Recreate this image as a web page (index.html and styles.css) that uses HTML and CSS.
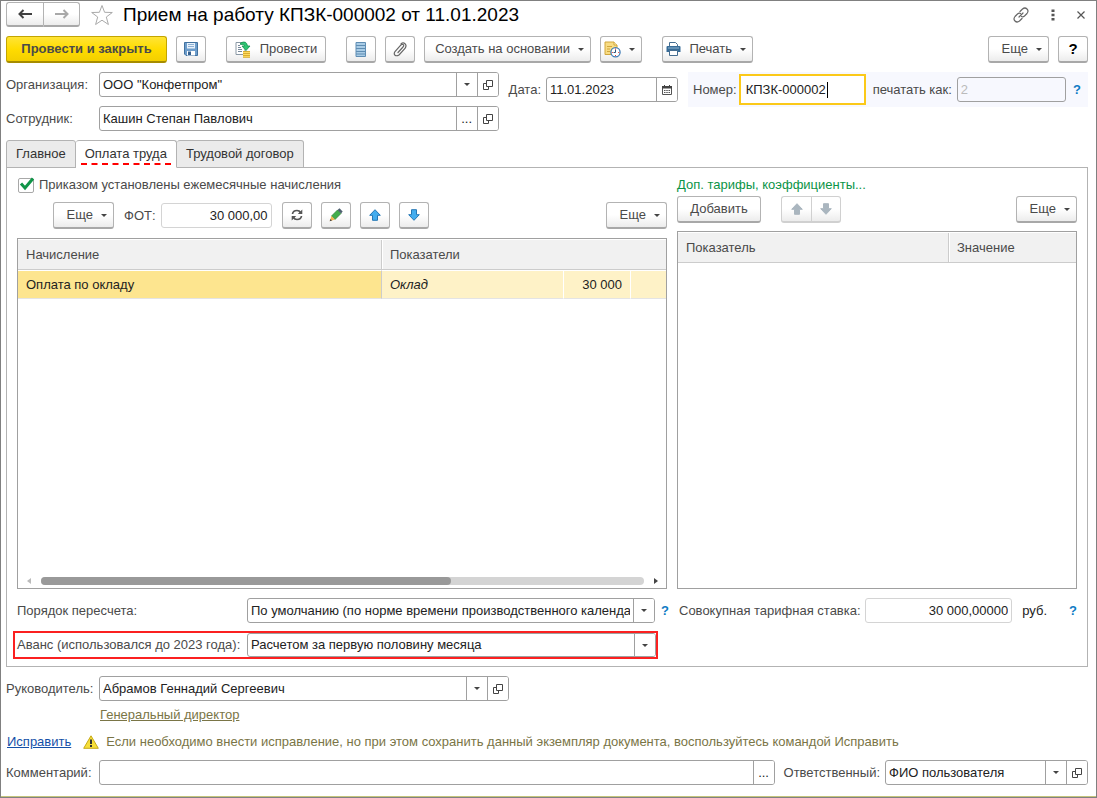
FILE: index.html
```html
<!DOCTYPE html>
<html lang="ru">
<head>
<meta charset="utf-8">
<title>Прием на работу</title>
<link rel="stylesheet" href="styles.css">
</head>
<body>
<svg class="sprite" aria-hidden="true">
  <symbol id="i-open" viewBox="0 0 10 10"><path d="M3.500 .5h6v6h-6zM3.500 3.500h-3v6h5v-3" fill="none" stroke="#444"/></symbol>
  <symbol id="i-up" viewBox="0 0 12 12"><path d="M6 .7 11.300 6.300H8.500v5h-5v-5H.7z" stroke-linejoin="round"/></symbol>
  <symbol id="i-down" viewBox="0 0 12 12"><path d="M6 11.300 .7 5.700h2.800v-5h5v5h2.800z" stroke-linejoin="round"/></symbol>
</svg>
<main class="window">
  <header class="titlebar">
    <div class="pair nav">
      <button class="btn" aria-label="Назад"><svg width="15" height="10" viewBox="0 0 15 10"><path d="M2 5h12" stroke="#404040" stroke-width="2"/><path d="M5.500 1 1.500 5l4 4" fill="none" stroke="#404040" stroke-width="2"/></svg></button>
      <button class="btn" aria-label="Вперед"><svg width="15" height="10" viewBox="0 0 15 10"><path d="M1 5h12" stroke="#a8a8a8" stroke-width="2"/><path d="M9.500 1l4 4-4 4" fill="none" stroke="#a8a8a8" stroke-width="2"/></svg></button>
    </div>
    <button class="plain star" aria-label="В избранное"><svg width="24" height="22" viewBox="0 0 24 22"><path d="M12 1.500 14.600 8.300 22.300 8.500 16.300 13 18.400 20.500 12 16.200 5.600 20.500 7.700 13 1.700 8.500 9.400 8.300z" fill="#fff" stroke="#aaa"/></svg></button>
    <h1>Прием на работу КПЗК-000002 от 11.01.2023</h1>
    <div class="controls">
      <button class="plain" aria-label="Ссылка"><svg width="16" height="16" viewBox="0 0 16 16"><g fill="none" stroke="#666" stroke-width="1.200" stroke-linecap="round"><path d="M7 4.500 9.500 2Q12 0 14 2t0 4.500L11.500 9Q10 10.300 8.500 9.500M9 11.500 6.500 14Q4 16 2 14T2 9.500L4.500 7Q6 5.700 7.500 6.500"/><path d="M6 10l4-4"/></g></svg></button>
      <button class="plain" aria-label="Меню"><svg width="4" height="12" viewBox="0 0 4 12"><path d="M.5 .5h3v2.500h-3zM.5 4.700h3v2.500h-3zM.5 9h3v2.500h-3z" fill="#555"/></svg></button>
      <button class="plain" aria-label="Закрыть"><svg width="8" height="8" viewBox="0 0 8 8"><path d="M.5 .5l7 7M7.500 .5l-7 7" stroke="#555" stroke-width="1.200"/></svg></button>
    </div>
  </header>

  <div class="toolbar">
    <button class="btn primary">Провести и закрыть</button>
    <button class="btn icon" aria-label="Записать"><svg width="14" height="14" viewBox="0 0 14 14"><path d="M.5 .5h13v13H2L.5 12z" fill="#6d9dcb" stroke="#41719f"/><path d="M3 1h8v5.500H3z" fill="#e8f1fa"/><path d="M4 2.500h6M4 4.500h6" stroke="#8cb0d4"/><path d="M3 9h8v4.500H3z" fill="#fff"/><path d="M4 9.500h3V13H4z" fill="#35608f"/></svg></button>
    <button class="btn post"><svg width="16" height="17" viewBox="0 0 16 17"><path d="M1 1.500h9v12H1z" fill="#fff" stroke="#8a98a5"/><path d="M3 4.500h2M3 6.500h3M3 8.500h4M3 10.500h4" stroke="#789"/><path d="M5.500 2q6-3 7 3h2.500l-4 4.500-4-4.500h2.500Q9.500 2.500 5.500 3.500z" fill="#2cc572" stroke="#15904c" stroke-width=".8"/><path d="M8 10.500h7V16H8z" fill="#ffdc62"/><path d="M8 10.500h7M8 12.500h7M8 14.500h7M8 16.300h7" stroke="#d9ad30"/></svg>Провести</button>
    <button class="btn icon" aria-label="Движения"><svg width="12" height="15" viewBox="0 0 12 15"><path d="M1 .5h9.500v14H1z" fill="#a9cce6" stroke="#5f8db3"/><path d="M1 3.500h9.500M1 6.500h9.500M1 9.500h9.500M1 12h9.500" stroke="#5f8db3"/></svg></button>
    <button class="btn icon" aria-label="Файлы"><svg width="14" height="15" viewBox="0 0 14 15"><path d="M5 10.500 10 5q1.500-2 0-2.500T7.500 3.500L2 9.500Q.5 12 2 13.200t4-.2L12 6.500Q14 3.500 12 1.700T8 2" fill="none" stroke="#666" stroke-width="1.200" stroke-linecap="round"/></svg></button>
    <button class="btn menu wide">Создать на основании</button>
    <button class="btn menu later" aria-label="Отложить"><svg width="17" height="17" viewBox="0 0 17 17"><path d="M1 1h9l3 3v9.500H1z" fill="#f8dc83" stroke="#d0a63c"/><path d="M10 1v3h3" fill="#fff3c4" stroke="#d0a63c"/><path d="M3 5.500h5M3 8h3M3 10.500h3" stroke="#d0a63c"/><circle cx="11.500" cy="11.300" r="4.600" fill="#fff" stroke="#3e7cb6" stroke-width="1.300"/><path d="M11.500 8.500v3H9.500" stroke="#28527d" fill="none"/><path d="M11.500 7.500v1M11.500 14v1M7.800 11.500h1M14.200 11.500h1" stroke="#e23b2e"/></svg></button>
    <button class="btn menu print"><svg width="15" height="14" viewBox="0 0 15 14"><path d="M3.500 4V.5h6l2 2V4" fill="#fff" stroke="#456d90"/><path d="M1.500 4h12q1 0 1 1v5H.5V5q0-1 1-1z" fill="#386c97"/><path d="M2 6h11" stroke="#8fb5d2"/><path d="M3.500 8.500h8v5h-8z" fill="#fff" stroke="#456d90"/></svg>Печать</button>
    <span class="grow"></span>
    <button class="btn menu more">Еще</button>
    <button class="btn icon help-btn">?</button>
  </div>

  <div class="head">
    <div class="refs">
      <label for="org">Организация:</label>
      <div class="field"><input id="org" value="ООО &quot;Конфетпром&quot;"><button class="caret" aria-label="Выбрать"></button><button aria-label="Открыть"><svg width="10" height="10"><use href="#i-open"/></svg></button></div>
      <label for="emp">Сотрудник:</label>
      <div class="field"><input id="emp" value="Кашин Степан Павлович"><button aria-label="Выбрать">...</button><button aria-label="Открыть"><svg width="10" height="10"><use href="#i-open"/></svg></button></div>
    </div>
    <div class="date">
      <label for="date">Дата:</label>
      <div class="field"><input id="date" value="11.01.2023"><button aria-label="Календарь"><svg width="10" height="10" viewBox="0 0 10 10"><path d="M.5 1.500h9v8h-9z" fill="#fff" stroke="#555"/><path d="M0 1h10v2.500H0zM2 0h1v2H2zM7 0h1v2H7z" fill="#444"/><path d="M2 5.500h6M2 7.500h6" stroke="#555" stroke-dasharray="1.500 .75"/></svg></button></div>
    </div>
    <div class="number">
      <label for="num">Номер:</label>
      <div class="active"><input id="num" value="КПЗК-000002"><i class="cursor"></i></div>
      <label for="pr" class="print-label">печатать как:</label>
      <div class="field printas"><input id="pr" placeholder="2"></div>
      <button class="plain hint" aria-label="Справка">?</button>
    </div>
  </div>

  <div class="tabs" role="tablist">
    <button role="tab">Главное</button>
    <button role="tab" class="selected" aria-selected="true"><span>Оплата труда</span></button>
    <button role="tab">Трудовой договор</button>
  </div>
  <section class="panel">
    <div class="left">
      <label class="check"><input type="checkbox" checked><span class="box"><svg width="16" height="14" viewBox="0 0 16 14"><path d="M2 6.500 6 11 14 1.500" fill="none" stroke="#109548" stroke-width="3"/></svg></span>Приказом установлены ежемесячные начисления</label>
      <div class="bar">
        <button class="btn menu more">Еще</button>
        <label for="fot">ФОТ:</label>
        <div class="field soft fot"><input id="fot" value="30 000,00"></div>
        <div class="tools">
          <button class="btn icon" aria-label="Обновить"><svg width="12" height="12" viewBox="0 0 12 12"><path d="M1.500 5Q2 1.500 6 1.500q2.500 0 3.500 2M10.500 7Q10 10.500 6 10.500q-2.500 0-3.500-2" fill="none" stroke="#555" stroke-width="1.700"/><path d="M11.300 .5V5H6.800zM.7 11.500V7h4.500z" fill="#555"/></svg></button>
          <button class="btn icon" aria-label="Изменить"><svg width="14" height="14" viewBox="0 0 14 14"><path d="M2.500 8 8.500 2l3.500 3.500-6 6z" fill="#43ad4c" stroke="#2c7f35" stroke-width=".7"/><path d="M8.500 2 10.500 .3l3.200 3.200L12 5.500z" fill="#4f6170"/><path d="M2.500 8 6 11.500 .7 13.300z" fill="#f5b553"/><path d="M1.500 11 3 12.500 .7 13.300z" fill="#444"/></svg></button>
          <button class="btn icon blue" aria-label="Вверх"><svg width="12" height="12"><use href="#i-up"/></svg></button>
          <button class="btn icon blue" aria-label="Вниз"><svg width="12" height="12"><use href="#i-down"/></svg></button>
        </div>
        <span class="grow"></span>
        <button class="btn menu more">Еще</button>
      </div>
      <div class="grid">
        <table>
          <colgroup><col class="c-name"><col><col class="c-sum"><col class="c-end"></colgroup>
          <thead><tr><th>Начисление</th><th colspan="3">Показатели</th></tr></thead>
          <tbody><tr><td class="current">Оплата по окладу</td><td class="kind">Оклад</td><td class="num">30 000</td><td class="num"></td></tr></tbody>
        </table>
        <div class="scroll"><svg width="4" height="6" viewBox="0 0 4 6"><path d="M4 0v6L0 3z" fill="#bbb"/></svg><div class="track"><div class="thumb"></div></div><svg width="4" height="6" viewBox="0 0 4 6"><path d="M0 0v6l4-3z" fill="#444"/></svg></div>
      </div>
    </div>
    <div class="right">
      <h2>Доп. тарифы, коэффициенты...</h2>
      <div class="bar">
        <button class="btn add">Добавить</button>
        <div class="pair off">
          <button class="btn" disabled aria-label="Вверх"><svg width="12" height="12"><use href="#i-up"/></svg></button>
          <button class="btn" disabled aria-label="Вниз"><svg width="12" height="12"><use href="#i-down"/></svg></button>
        </div>
        <span class="grow"></span>
        <button class="btn menu more">Еще</button>
      </div>
      <div class="grid">
        <table>
          <colgroup><col><col class="c-val"></colgroup>
          <thead><tr><th>Показатель</th><th>Значение</th></tr></thead>
        </table>
      </div>
    </div>
    <div class="calc">
      <label for="order">Порядок пересчета:</label>
      <div class="field"><select id="order"><option>По умолчанию (по норме времени производственного календа</option></select><span class="caret"></span></div>
      <button class="plain hint" aria-label="Справка">?</button>
    </div>
    <div class="rate">
      <label for="rate">Совокупная тарифная ставка:</label>
      <div class="field soft"><input id="rate" value="30 000,00000"></div>
      <span class="unit">руб.</span>
      <button class="plain hint" aria-label="Справка">?</button>
    </div>
    <div class="advance">
      <label for="adv">Аванс (использовался до 2023 года):</label>
      <div class="field"><select id="adv"><option>Расчетом за первую половину месяца</option></select><span class="caret"></span></div>
    </div>
  </section>

  <footer class="foot">
    <div class="chief">
      <label for="chief">Руководитель:</label>
      <div class="field"><input id="chief" value="Абрамов Геннадий Сергеевич"><button class="caret" aria-label="Выбрать"></button><button aria-label="Открыть"><svg width="10" height="10"><use href="#i-open"/></svg></button></div>
    </div>
    <a class="post-link" href="#">Генеральный директор</a>
    <div class="fix">
      <a href="#">Исправить</a>
      <svg width="16" height="14" viewBox="0 0 16 14"><path d="M8 .8 15.300 13.300H.7z" fill="#f7df3a" stroke="#c5a917" stroke-linejoin="round"/><path d="M7 4.500h2V9H7zM7 10h2v2H7z" fill="#333"/></svg>
      <p>Если необходимо внести исправление, но при этом сохранить данный экземпляр документа, воспользуйтесь командой Исправить</p>
    </div>
    <div class="note">
      <label for="note">Комментарий:</label>
      <div class="field"><input id="note"><button aria-label="Открыть текст">...</button></div>
      <label for="resp" class="resp-label">Ответственный:</label>
      <div class="field resp"><input id="resp" value="ФИО пользователя"><button class="caret" aria-label="Выбрать"></button><button aria-label="Открыть"><svg width="10" height="10"><use href="#i-open"/></svg></button></div>
    </div>
  </footer>
</main>
</body>
</html>
```
FILE: styles.css
```css
* { box-sizing: border-box; }
body { margin: 0; background: #fff; color: #4a4a4a; font: 13px/16px "Liberation Sans", Arial, sans-serif; }
button, input, select { font: inherit; color: inherit; margin: 0; }
.sprite { display: none; }
svg { display: block; flex: none; }
label { white-space: nowrap; }
.grow { flex: 1; }

.window { min-height: 100vh; display: flex; flex-direction: column; padding: 1px 8px 12px 5px; border: 1px solid #808080; box-shadow: inset 0 -1px #c4c47c; }

.btn { display: inline-flex; align-items: center; justify-content: center; height: 27px; padding: 0 12px; border: 1px solid #b3b3b3; border-bottom: 2px solid #a8a8a8; border-radius: 3px; background: linear-gradient(#fff 50%, #ececec); white-space: nowrap; }
.btn.icon { width: 30px; padding: 0; }
.btn.menu::after, .caret::after { content: ""; border: 3px solid transparent; border-top-color: #444; border-bottom: 0; }
.btn.menu { padding: 0 6px; justify-content: flex-end; gap: 8px; }
.btn.more { width: 61px; }
.plain { display: inline-flex; align-items: center; padding: 0; border: 0; background: none; }
.pair { display: flex; }
.pair .btn { width: 30px; padding: 0; }
.pair .btn:first-child { border-radius: 3px 0 0 3px; border-right: 0; }
.pair .btn:last-child { border-radius: 0 3px 3px 0; }

.titlebar { display: flex; align-items: center; height: 25px; gap: 10px; }
.nav .btn { width: 37px; height: 25px; }
h1 { flex: 1; margin: 0 0 0 -1px; font-size: 19px; line-height: 22px; font-weight: 400; color: #000; }
.controls { display: flex; align-items: center; gap: 22px; padding-right: 3px; }

.toolbar { display: flex; gap: 9px; margin-top: 9px; }
.toolbar .primary { width: 161px; border-color: #c3a500 #c3a500 #a68c00; background: linear-gradient(#ffe436, #ffdc00 50%, #f3cf00); font-weight: 700; }
.toolbar .post { width: 100px; gap: 9px; margin: 0 11px; }
.toolbar .wide { width: 167px; }
.toolbar .later { width: 42px; }
.toolbar .print { width: 91px; margin-left: 11px; }
.toolbar .help-btn { color: #000; font-weight: 700; font-size: 15px; }

.field { display: flex; height: 25px; min-width: 0; border: 1px solid #a0a0a0; border-radius: 3px; background: #fff; overflow: hidden; color: #222; }
.field input, .field select { flex: 1; width: 0; min-width: 0; padding: 0 3px; border: 0; background: none; appearance: none; outline: 0; }
.field button, .field .caret { display: flex; align-items: center; justify-content: center; flex: none; width: 21px; padding: 0; border: 0; border-left: 1px solid #a0a0a0; background: #fff; }
.soft { border-color: #d4d4d4; }
.soft input { text-align: right; }
.hint { color: #0f7bc4; font-weight: 700; }

.head { display: flex; gap: 10px; margin-top: 9px; }
.refs { flex: 1; display: grid; grid-template-columns: 93px 1fr; row-gap: 9px; align-items: center; }
.date { display: flex; align-items: center; gap: 5px; height: 35px; }
.date .field { width: 132px; }
.number { display: flex; align-items: center; height: 35px; width: 400px; padding: 0 7px 0 5px; background: #f7f8fe; }
.active { display: flex; align-items: center; width: 127px; height: 31px; margin: 0 7px 0 2px; border: 2px solid #fbc919; background: #fff; color: #222; overflow: hidden; }
.active input { width: 86px; padding: 0 0 0 5px; border: 0; outline: 0; background: none; }
.cursor { width: 1px; height: 16px; background: #000; }
.printas { flex: 1; margin: 0 7px 0 5px; background: none; }
.printas input::placeholder { color: #bbb; }

.tabs { display: flex; margin-top: 9px; }
.tabs button { height: 28px; padding: 0 9px; border: 1px solid #b3b3b3; border-left-width: 0; background: #ebebeb; border-radius: 3px 3px 0 0; color: #333; }
.tabs button:first-child { border-left-width: 1px; }
.tabs .selected { padding: 0 5px; background: #fff; border-bottom-color: #fff; position: relative; z-index: 1; }
.tabs .selected span { display: block; height: 22px; padding: 3px 4px 0; border-bottom: 2px dashed #f00; }

.panel { flex: 1; display: grid; grid-template-columns: 13fr 8fr; grid-template-rows: 1fr 25px 28px; gap: 8px 10px; margin-top: -1px; padding: 8px 10px 7px; border: 1px solid #b3b3b3; }
.left, .right { display: flex; flex-direction: column; min-width: 0; margin-bottom: 1px; }
.check { display: flex; align-items: center; height: 18px; gap: 5px; margin-left: 1px; position: relative; }
.check input { position: absolute; opacity: 0; }
.box { width: 16px; height: 15px; border: 1px solid #a8a8a8; border-radius: 2px; }
.box svg { margin-top: -2px; }
.left .bar { display: flex; align-items: center; margin: 8px 0 9px; padding-left: 36px; }
.left .bar label { margin: 0 5px 0 10px; }
.fot { width: 111px; }
.tools { display: flex; gap: 9px; margin-left: 10px; }
.blue svg { fill: #43adef; stroke: #2577b4; }
h2 { margin: 0; color: #0b9447; font: inherit; line-height: 18px; }
.right .bar { display: flex; margin: 2px 0 8px; }
.add { width: 84px; padding: 0; }
.off { margin-left: 20px; }
.off .btn { border-color: #d0d0d0; }
.off svg { fill: #aab6bf; stroke: #aab6bf; }

.grid { flex: 1; display: flex; flex-direction: column; justify-content: space-between; border: 1px solid #a0a0a0; padding-top: 1px; }
table { width: 100%; table-layout: fixed; border-collapse: separate; border-spacing: 0; }
.c-name { width: 56%; }
.c-sum { width: 67px; }
.c-end { width: 36px; }
.c-val { width: 128px; }
th, td { padding: 0 8px; text-align: left; font-weight: 400; white-space: nowrap; }
th { height: 30px; background: #f1f1f1; border-bottom: 1px solid #ccc; }
th + th { border-left: 1px solid #ccc; box-shadow: inset 1px 0 #fff; }
td { height: 29px; background: #fef2c7; color: #222; border-top: 1px solid #fff; border-bottom: 1px solid #e4e4e4; }
.current { background: #fde58f; }
.kind { font-style: italic; border-left: 1px solid #ccc; }
.num { text-align: right; border-left: 1px solid #fff; }
.scroll { display: flex; align-items: center; gap: 10px; height: 14px; padding: 0 8px 0 9px; }
.track { flex: 1; height: 8px; border-radius: 4px; background: #d4d4d4; }
.thumb { width: 68%; height: 8px; border-radius: 4px; background: #999; }

.calc, .rate, .advance { display: flex; align-items: center; min-width: 0; }
.calc label, .advance label { flex: none; width: 230px; }
.calc .field, .advance .field, .rate .field { flex: 1; }
.calc .hint { margin: 0 -2px 0 6px; }
.rate label { margin: 0 4px 0 2px; }
.rate .unit { margin: 0 22px 0 10px; color: #222; }
.advance { margin: 0 9px 0 -4px; padding-left: 2px; border: 2px solid #fb2020; }
.advance .field { height: 24px; }

.foot { display: flex; flex-direction: column; margin-top: 9px; }
.chief, .note { display: flex; align-items: center; }
.chief label, .note label:first-child { flex: none; width: 93px; }
.chief .field { width: 410px; }
.post-link { align-self: flex-start; margin: 6px 0 0 94px; color: #7a7546; }
.fix { display: flex; align-items: center; gap: 12px; margin: 10px 0 9px 1px; line-height: 18px; }
.fix a { color: #1450a8; }
.fix p { margin: 0 0 0 -5px; color: #7a7546; }
.note .field { flex: 1; }
.note .resp-label { margin: 0 5px 0 9px; }
.note .resp { flex: none; width: 203px; }
```
